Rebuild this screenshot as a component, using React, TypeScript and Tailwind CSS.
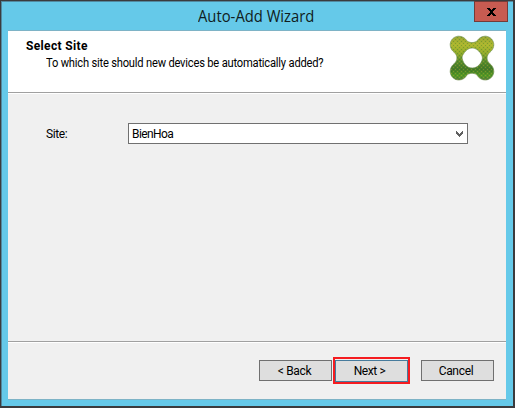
import React from "react";

function SiteLogo() {
  return (
    <svg width="46" height="46" viewBox="0 0 46 46" className="block">
      <defs>
        <linearGradient id="leaf" x1="0" y1="0" x2="0" y2="1">
          <stop offset="0" stopColor="#93a532" />
          <stop offset="0.2" stopColor="#acb92f" />
          <stop offset="0.4" stopColor="#8dab2b" />
          <stop offset="0.55" stopColor="#5c8f2c" />
          <stop offset="0.75" stopColor="#457b27" />
          <stop offset="0.9" stopColor="#559b25" />
          <stop offset="1" stopColor="#55803a" />
        </linearGradient>
        <pattern id="grain" width="4" height="4" patternUnits="userSpaceOnUse">
          <path d="M0 0H1V1H0ZM2 2H3V3H2Z" fill="#d8a83a" fillOpacity="0.35" />
          <path d="M2 0H3V1H2ZM0 2H1V3H0Z" fill="#255c2c" fillOpacity="0.3" />
        </pattern>
      </defs>
      {["url(#leaf)", "url(#grain)"].map((fill) => (
        <path
          key={fill}
          fill={fill}
          stroke="#6f8f50"
          strokeOpacity="0.6"
          strokeWidth="0.6"
          fillRule="evenodd"
          d="M9.800 1.200C13.500 1.200 16 3.200 17.500 5.300C19.500 8.300 26.500 8.300 28.500 5.300C30 3.200 32.500 1.200 36.200 1.200C41 1.200 44.800 5 44.800 9.800C44.800 13.500 42.800 15.700 40.700 17.500C37.200 20.500 37.200 25.500 40.700 28.500C42.800 30.300 44.800 32.500 44.800 36.400C44.800 41 41 45 36.200 45C32.500 45 30 43 28.500 40.700C26.500 37.500 19.500 37.500 17.500 40.700C16 43 13.500 45 9.800 45C5 45 1.200 41 1.200 36.400C1.200 32.500 3.200 30.300 5.300 28.500C8.800 25.500 8.800 20.500 5.300 17.500C3.200 15.700 1.200 13.500 1.200 9.800C1.200 5 5 1.200 9.800 1.200ZM23.200 13C19.200 13 17 15.500 15.400 17.500C13.700 20 12.700 21.500 13.200 23.500C13.800 26.500 15.200 28.500 16.500 30C18.500 32 20.500 33 23.200 33C26 33 28.200 32 30 30C31.500 28.500 33 26.500 33.400 23.500C33.600 21.500 32.700 20 31 17.500C29.400 15.500 27.200 13 23.200 13Z"
        />
      ))}
    </svg>
  );
}

export default function App() {
  return (
    <div className="flex h-[408px] w-[515px] flex-col border-t border-r-2 border-b-2 border-l border-[#3b3b3d] bg-[#65c9e9] font-['Roboto','Liberation_Sans',sans-serif] text-[12px] text-black">
      <div className="flex min-h-0 flex-1 flex-col border-t border-l border-[#5289a0] pr-[6px] pb-[6px] pl-[6px]">
        <header className="flex h-[28px] shrink-0 items-start">
          <h1 className="mt-[2px] ml-[190px] w-[260px] shrink-0 origin-left scale-x-[0.925] text-[16px] leading-[24px] font-normal whitespace-nowrap font-['Open_Sans','Noto_Sans',sans-serif] text-[#101c20]">
            Auto-Add Wizard
          </h1>
          <button aria-label="Close" className="-mt-px ml-[16px] flex h-[21px] w-[34px] shrink-0 items-center justify-center border border-[#743b38] bg-[#c75b51] pl-px">
            <svg width="9" height="8" viewBox="0 0 9 8" shapeRendering="crispEdges">
              <path fill="#000" d="M0 0H3V1H4V2H5V1H6V0H9V1H8V2H7V3H6V5H7V6H8V7H9V8H6V7H5V6H4V7H3V8H0V7H1V6H2V5H3V3H2V2H1V1H0Z" />
            </svg>
          </button>
        </header>
        <main className="flex w-[498px] flex-1 flex-col border-t border-b border-[#7eb3c6] bg-[#f0f0f0]">
          <section className="flex h-[61px] shrink-0 justify-between bg-white pr-[11px] pl-[18px]">
            <div className="pt-[7px]">
              <h2 className="text-[12px] leading-[16px] font-bold tracking-[0.35px]">Select Site</h2>
              <p className="ml-[20px] origin-left scale-x-[0.93] text-[12px] leading-[18px] tracking-[-0.22px] whitespace-nowrap">To which site should new devices be automatically added?</p>
            </div>
            <div className="pt-[4px]"><SiteLogo /></div>
          </section>
          <div className="h-[2px] shrink-0 border-t border-b border-t-[#a0a0a0] border-b-white" />
          <section className="flex flex-1 items-start pt-[29px] pl-[38px]">
            <label className="w-[82px] leading-[22px] tracking-[-0.4px]">Site:</label>
            <div className="flex h-[21px] w-[340px] items-center justify-between border border-[#707070] bg-white pr-[4px] pl-[3px]">
              <span className="tracking-[-0.6px]">BienHoa</span>
              <svg width="7" height="6" viewBox="0 0 7 6" shapeRendering="crispEdges">
                <path fill="#606060" d="M0 0H1V1H2V2H3V3H4V2H5V1H6V0H7V3H6V4H5V5H4V6H3V5H2V4H1V3H0Z" />
              </svg>
            </div>
          </section>
          <div className="h-[2px] shrink-0 border-t border-b border-t-[#a0a0a0] border-b-white" />
          <footer className="flex h-[56px] shrink-0 items-start pt-[14px] pl-[251px]">
            <button className="mt-[3px] h-[21px] w-[73px] border border-[#707070] bg-[#dedede] pr-[2px] tracking-[-0.3px]">&lt; Back</button>
            <div className="ml-px flex h-[27px] w-[77px] border-2 border-[#f51c20] pt-px">
              <button className="flex-1 border border-[#477b9c] bg-[#dedede] pr-[4px] tracking-[-0.4px]">Next &gt;</button>
            </div>
            <button className="mt-[3px] ml-[11px] h-[21px] w-[73px] border border-[#707070] bg-[#dedede] pr-[3px] tracking-[-0.3px]">Cancel</button>
          </footer>
        </main>
      </div>
    </div>
  );
}
